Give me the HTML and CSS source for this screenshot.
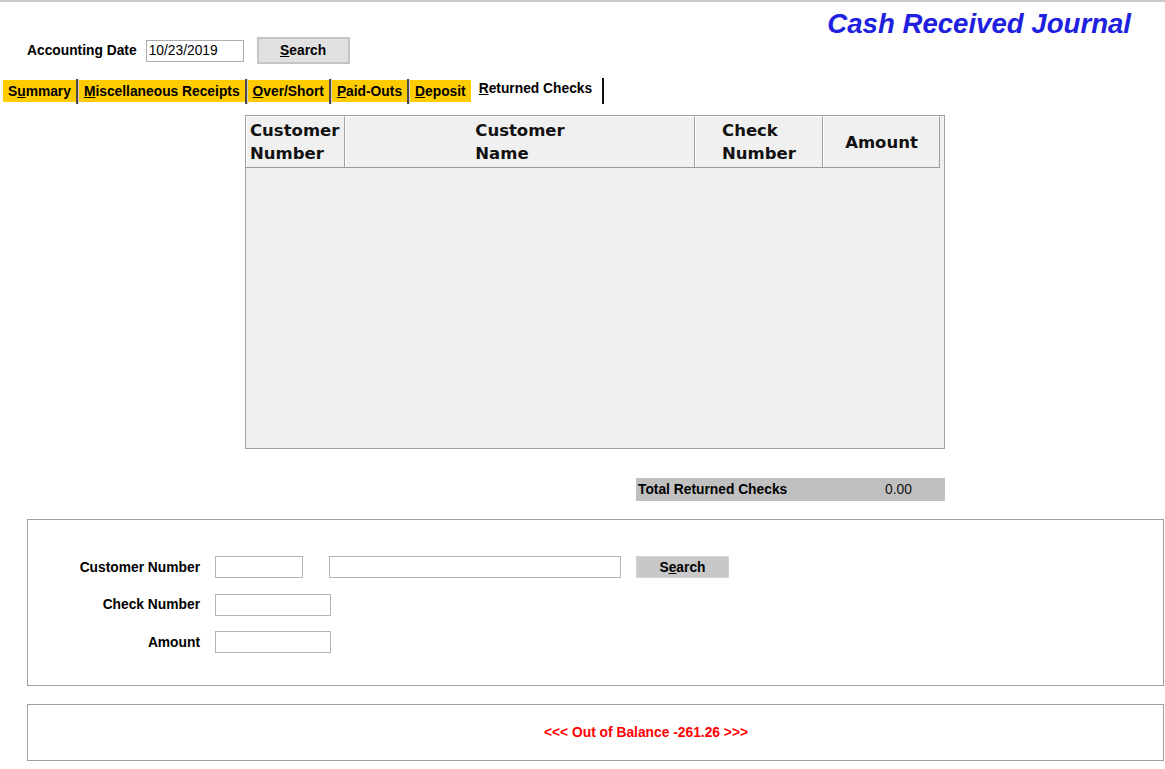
FILE: index.html
```html
<!DOCTYPE html>
<html>
<head>
<meta charset="utf-8">
<title>Cash Received Journal</title>
<link rel="stylesheet" href="styles.css">
</head>
<body>
<div class="top">
  <div class="acct">
    <span class="lbl">Accounting Date</span>
    <input class="date-input" type="text" value="10/23/2019">
    <button class="btn-search"><u>S</u>earch</button>
  </div>
  <h1 class="title">Cash Received Journal</h1>
</div>

<div class="tabs">
  <span class="tab">S<u>u</u>mmary</span><span class="sep"></span>
  <span class="tab"><u>M</u>iscellaneous Receipts</span><span class="sep"></span>
  <span class="tab"><u>O</u>ver/Short</span><span class="sep"></span>
  <span class="tab"><u>P</u>aid-Outs</span><span class="sep"></span>
  <span class="tab"><u>D</u>eposit</span>
  <span class="tab active"><u>R</u>eturned Checks</span><span class="sep-dark"></span>
</div>

<div class="grid">
  <div class="grid-head">
    <div class="hc c1"><span class="ht">Customer<br>Number</span></div>
    <div class="hc c2 center"><span class="ht">Customer<br>Name</span></div>
    <div class="hc c3 center"><span class="ht">Check<br>Number</span></div>
    <div class="hc c4 center"><span class="ht">Amount</span></div>
  </div>
</div>

<div class="total">
  <span class="total-lbl">Total Returned Checks</span>
  <span class="total-val">0.00</span>
</div>

<div class="form-box">
  <div class="form-grid">
    <label class="flbl">Customer Number</label>
    <div class="frow">
      <input class="in in-num" type="text">
      <input class="in in-name" type="text">
      <button class="btn-search2">S<u>e</u>arch</button>
    </div>
    <label class="flbl">Check Number</label>
    <div class="frow"><input class="in in-mid" type="text"></div>
    <label class="flbl">Amount</label>
    <div class="frow"><input class="in in-mid" type="text"></div>
  </div>
</div>

<div class="balance-box">
  <span class="balance">&lt;&lt;&lt; Out of Balance -261.26 &gt;&gt;&gt;</span>
</div>
</body>
</html>
```
FILE: styles.css
```css
* { box-sizing: border-box; }
html, body { margin: 0; padding: 0; background: #fff; }
body {
  border-top: 2px solid #c8c8c8;
  font-family: "Liberation Sans", Arial, sans-serif;
  font-size: 13.8px;
  color: #000;
  width: 1165px;
}
.top {
  display: flex;
  justify-content: space-between;
  align-items: flex-start;
}
.acct {
  display: flex;
  align-items: center;
  padding-top: 35px;
  padding-left: 27px;
  height: 62px;
}
.lbl { font-weight: bold; }
.date-input {
  margin-left: 9px;
  width: 98px;
  height: 22px;
  border: 1px solid #adadad;
  padding: 0 2px;
  font-family: "Liberation Sans", Arial, sans-serif;
  font-size: 13.8px;
  color: #000;
  outline: none;
}
.btn-search {
  margin-left: 13px;
  width: 93px;
  height: 27px;
  background: #e1e1e1;
  border: 2px solid #c4c4c4;
  font-family: "Liberation Sans", Arial, sans-serif;
  font-size: 13.8px;
  font-weight: bold;
  color: #000;
  padding: 0;
}
.title {
  margin: 6px 34px 0 0;
  font-size: 27.6px;
  line-height: 32px;
  font-weight: bold;
  font-style: italic;
  color: #2020e0;
  font-family: "Liberation Sans", Arial, sans-serif;
}
.tabs {
  margin-top: 15px;
  padding-left: 3px;
  display: flex;
  align-items: center;
  height: 24px;
}
.tab {
  display: inline-block;
  background: #ffcc00;
  height: 22px;
  line-height: 23px;
  padding: 0 5px;
  font-weight: bold;
  white-space: nowrap;
}
.tab.active {
  background: transparent;
  height: 24px;
  line-height: 20px;
  padding: 0 10px 0 8px;
}
.sep {
  display: inline-block;
  width: 3px;
  height: 25px;
  background: linear-gradient(to right, #4a4a4a 0, #4a4a4a 2px, #d0d0d0 2px);
}
.sep-dark {
  display: inline-block;
  width: 2px;
  height: 26px;
  background: #111;
}
.grid {
  margin-top: 12px;
  margin-left: 245px;
  width: 700px;
  height: 334px;
  border: 1px solid #a0a0a0;
  background: #f0f0f0;
}
.grid-head {
  display: flex;
  height: 52px;
  width: 694px;
  border-bottom: 1px solid #9a9a9a;
}
.hc {
  display: flex;
  align-items: center;
  border-top: 1px solid #ffffff;
  border-left: 1px solid #ffffff;
  border-right: 1px solid #a0a0a0;
  padding: 0 0 0 3px;
  font-family: "DejaVu Sans", Verdana, sans-serif;
  font-weight: bold;
  font-size: 16.5px;
  line-height: 23px;
  color: #111;
}
.hc.center { justify-content: center; padding: 0; }
.ht { display: inline-block; text-align: left; }
.c1 { width: 99px; padding-left: 3px; }
.c2 { width: 350px; }
.c3 { width: 128px; }
.c4 { width: 117px; }
.total {
  margin-top: 29px;
  margin-left: 636px;
  width: 309px;
  height: 23px;
  background: #c0c0c0;
  display: flex;
  align-items: center;
  padding-left: 2px;
}
.total-lbl { font-weight: bold; width: 247px; }
.total-val { color: #111; }
.form-box {
  margin-top: 18px;
  margin-left: 27px;
  width: 1137px;
  height: 167px;
  border: 1px solid #a0a0a0;
  padding-top: 36px;
}
.form-grid {
  display: grid;
  grid-template-columns: 172px auto;
  column-gap: 15px;
  row-gap: 15.5px;
  align-items: center;
}
.flbl {
  font-weight: bold;
  text-align: right;
}
.frow { display: flex; align-items: center; height: 22px; }
.in {
  height: 22px;
  border: 1px solid #b4b4b4;
  background: #fff;
  outline: none;
}
.in-num { width: 88px; }
.in-name { width: 292px; margin-left: 26px; }
.in-mid { width: 116px; }
.btn-search2 {
  margin-left: 15px;
  width: 93px;
  height: 22px;
  background: #c8c8c8;
  border: 1px solid #d4d4d4;
  font-family: "Liberation Sans", Arial, sans-serif;
  font-size: 13.8px;
  font-weight: bold;
  color: #000;
  padding: 0;
}
.balance-box {
  margin-top: 18px;
  margin-left: 27px;
  width: 1137px;
  height: 57px;
  border: 1px solid #a0a0a0;
  display: flex;
  align-items: center;
  justify-content: center;
  padding-left: 101px;
}
.balance {
  color: #ff0000;
  font-weight: bold;
}
```
